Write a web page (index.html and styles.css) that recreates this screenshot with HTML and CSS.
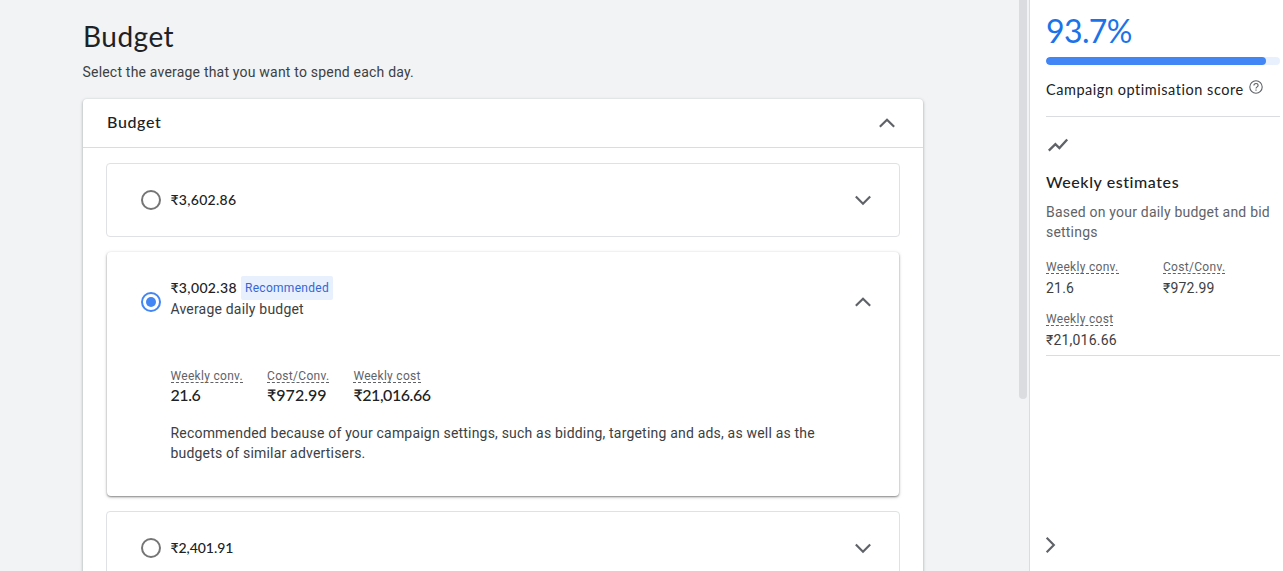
FILE: index.html
```html
<!DOCTYPE html>
<html lang="en">
<head>
<meta charset="utf-8">
<title>Budget</title>
<link rel="stylesheet" href="styles.css">
</head>
<body>
<div class="app">
  <main class="main">
    <h1 class="page-title">Budget</h1>
    <p class="page-sub">Select the average that you want to spend each day.</p>
    <section class="card">
      <header class="card-head">
        <h2 class="card-title">Budget</h2>
        <svg class="chevron" viewBox="0 0 24 24"><path d="M3.4 16.6 12 8 20.6 16.6"/></svg>
      </header>
      <div class="options">
        <div class="option">
          <span class="radio"></span>
          <span class="amount">₹3,602.86</span>
          <svg class="chevron" viewBox="0 0 24 24"><path d="M3.4 7.8 12 16.4 20.6 7.8"/></svg>
        </div>
        <div class="option-open">
          <div class="option-row">
            <span class="radio checked"></span>
            <div class="option-label">
              <div class="amount-line"><span class="amount wide">₹3,002.38</span><span class="tag">Recommended</span></div>
              <div class="caption">Average daily budget</div>
            </div>
            <svg class="chevron" viewBox="0 0 24 24"><path d="M3.4 16.6 12 8 20.6 16.6"/></svg>
          </div>
          <div class="metrics">
            <div><span class="metric-name">Weekly conv.</span><div class="metric-strong tight">21.6</div></div>
            <div><span class="metric-name">Cost/Conv.</span><div class="metric-strong">₹972.99</div></div>
            <div><span class="metric-name">Weekly cost</span><div class="metric-strong tight">₹21,016.66</div></div>
          </div>
          <p class="reason">Recommended because of your campaign settings, such as bidding, targeting and ads, as well as the<br>budgets of similar advertisers.</p>
        </div>
        <div class="option">
          <span class="radio"></span>
          <span class="amount narrow">₹2,401.91</span>
          <svg class="chevron" viewBox="0 0 24 24"><path d="M3.4 7.8 12 16.4 20.6 7.8"/></svg>
        </div>
      </div>
    </section>
  </main>
  <div class="scroll"><div class="thumb"></div></div>
  <aside class="panel">
    <div class="score">93.7%</div>
    <div class="bar"><div class="bar-fill" style="width:94%"></div></div>
    <div class="score-label"><span>Campaign optimisation score</span>
      <svg class="help" viewBox="0 0 14 14"><circle cx="7" cy="7" r="6.2"/><path d="M4.9 5.6C4.9 4.3 5.8 3.5 7 3.5S9.1 4.3 9.1 5.4C9.1 6.8 7 6.9 7 8.5M7 9.6V10.7"/></svg>
    </div>
    <div class="estimates">
      <svg class="trend" viewBox="0 0 24 24"><path d="M2.8 17.6 9.4 11.1 13.4 15.1 21.2 6.4"/></svg>
      <h3 class="est-title">Weekly estimates</h3>
      <p class="est-sub">Based on your daily budget and bid<br>settings</p>
      <div class="est-grid">
        <div><span class="metric-name">Weekly conv.</span><div class="metric-value">21.6</div></div>
        <div><span class="metric-name">Cost/Conv.</span><div class="metric-value">₹972.99</div></div>
        <div><span class="metric-name">Weekly cost</span><div class="metric-value">₹21,016.66</div></div>
      </div>
    </div>
    <svg class="chevron collapse" viewBox="0 0 24 24"><path d="M8 3.4 16.6 12 8 20.6"/></svg>
  </aside>
</div>
</body>
</html>
```
FILE: styles.css
```css
* { box-sizing: border-box; }
body { margin: 0; font: 14px/20px Roboto, sans-serif; letter-spacing: .2px; color: #3c4043; background: #fff; }
h1, h2, h3, p { margin: 0; font-weight: 400; }
.app { display: flex; height: 571px; overflow: hidden; }
.main { width: 1019px; flex: none; padding: 20px 96px 0 83px; background: #f1f3f4; }
.page-title { font: 400 28px/32px Lato, sans-serif; letter-spacing: .5px; color: #202124; }
.page-sub { margin: 10px 0 0 -.5px; letter-spacing: .2px; }
.card { height: 520px; margin-top: 17px; background: #fff; border-radius: 4px 4px 0 0; box-shadow: 0 1px 2px rgba(60,64,67,.3), 0 1px 3px 1px rgba(60,64,67,.15); }
.card-head { display: flex; align-items: center; justify-content: space-between; height: 49px; padding: 0 26px 0 24px; border-bottom: 1px solid #dadce0; }
.card-title { padding-bottom: 2px; font: 500 16px/24px Lato, sans-serif; letter-spacing: .65px; color: #202124; }
.chevron { width: 20px; height: 20px; flex: none; fill: none; stroke: #5f6368; stroke-width: 2.6; }
.options { padding: 15px 23px 0; }
.option { display: flex; align-items: center; height: 74px; padding: 0 26px 0 33px; border: 1px solid #dfe1e5; border-radius: 4px; }
.radio { display: grid; place-items: center; width: 20px; height: 20px; margin: 0 9.8px 0 .6px; flex: none; border: 2px solid #757575; border-radius: 50%; }
.radio.checked { border-color: #4285f4; }
.radio.checked::after { content: ""; width: 10px; height: 10px; border-radius: 50%; background: #4285f4; }
.option .chevron, .option-row .chevron { margin-left: auto; }
.amount { font: 500 14px/20px Lato, sans-serif; letter-spacing: .3px; color: #202124; }
.amount.wide { letter-spacing: .36px; }
.amount.narrow { letter-spacing: -.05px; }
.option-open { height: 244px; margin: 15px 1px; padding: 24px 26px 0 33px; border-radius: 4px; box-shadow: 0 1px 2px rgba(0,0,0,.42), 0 1px 4px rgba(0,0,0,.14); }
.option-row { display: flex; align-items: center; height: 52px; }
.option-label { height: 52px; }
.amount-line { display: flex; height: 23px; align-items: center; gap: 4px; }
.tag { height: 24px; padding: 0 4px; font-size: 12px; line-height: 24px; letter-spacing: .3px; color: #3367d6; background: #e8f0fe; border-radius: 2px; }
.metrics { display: flex; gap: 24px; margin: 42px 0 0 30.5px; }
.metric-name { display: block; width: fit-content; height: 13px; font-size: 12px; line-height: 13px; letter-spacing: .3px; color: #5f6368; border-bottom: 1px dashed #5f6368; }
.metric-strong { margin-top: 2px; font: 500 16px/20px Lato, sans-serif; letter-spacing: 0; color: #202124; }
.metric-strong.tight { letter-spacing: -.45px; }
.reason { margin: 18px 0 0 30.5px; letter-spacing: .195px; white-space: nowrap; }
.scroll { width: 10px; flex: none; background: #f1f3f4; }
.thumb { width: 8px; height: 399px; background: #dadce0; border-radius: 0 0 4px 4px; }
.panel { display: flex; flex-direction: column; width: 254px; padding: 13px 3px 16px 16px; border-left: 1px solid #dadce0; }
.score { font: 400 32px/36px Lato, sans-serif; letter-spacing: -.6px; color: #1a73e8; }
.bar { height: 8px; margin-top: 8px; background: #e8f0fe; border-radius: 4px; overflow: hidden; }
.bar-fill { height: 8px; background: #4285f4; border-radius: 4px; }
.score-label { display: flex; gap: 5px; height: 52px; padding-top: 15px; font: 400 14.5px/20px Lato, sans-serif; letter-spacing: .53px; color: #202124; border-bottom: 1px solid #dadce0; white-space: nowrap; }
.help { width: 14px; height: 14px; fill: none; stroke: #5f6368; stroke-width: 1.1; }
.estimates { height: 239px; padding-top: 16px; border-bottom: 1px solid #dadce0; }
.trend { display: block; width: 24px; height: 24px; fill: none; stroke: #5f6368; stroke-width: 2.3; }
.est-title { margin-top: 13px; font: 500 16px/24px Lato, sans-serif; letter-spacing: .57px; color: #202124; }
.est-sub { margin-top: 8px; color: #5f6368; white-space: nowrap; }
.est-grid { display: grid; grid-template-columns: 117px 117px; row-gap: 15px; margin-top: 19px; }
.metric-value { margin-top: 4px; }
.collapse { margin: auto 0 0 -6px; }
```
